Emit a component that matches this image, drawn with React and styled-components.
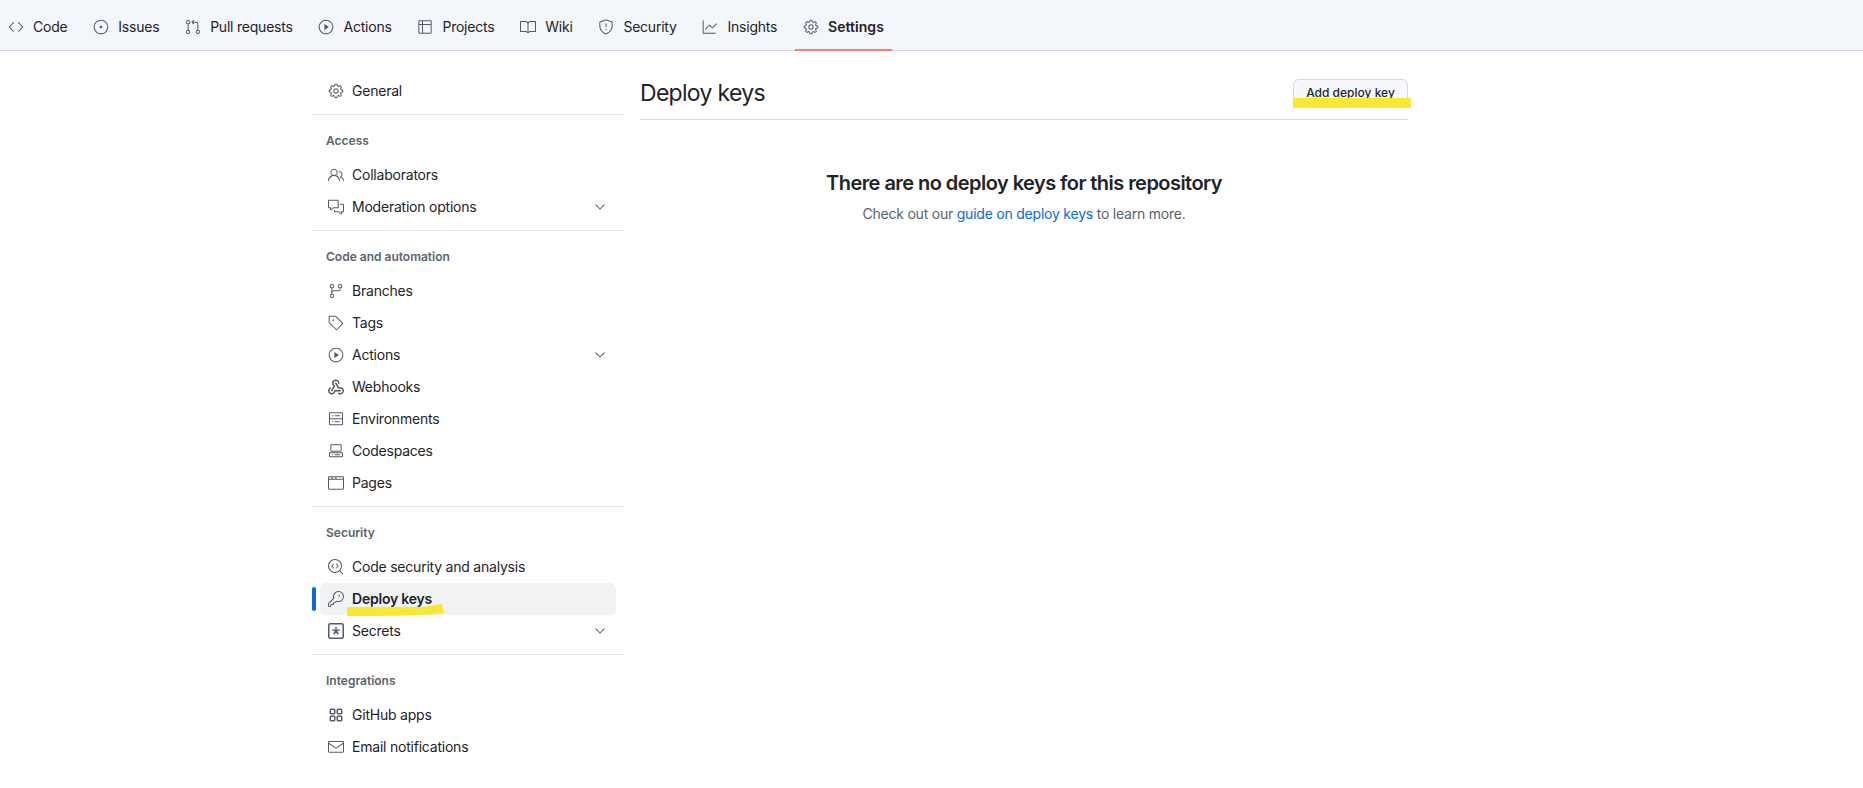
import React from "react";
import styled, { createGlobalStyle } from "styled-components";
import {
  GoCode, GoIssueOpened, GoGitPullRequest, GoPlay, GoTable, GoBook, GoShield, GoGraph, GoGear,
  GoPeople, GoCommentDiscussion, GoChevronDown, GoGitBranch, GoTag, GoServer,
  GoCodespaces, GoBrowser, GoCodescan, GoKey, GoMail,
} from "react-icons/go";

const Global = createGlobalStyle`
  html, body { margin: 0; padding: 0; background: #fff; }
  body { font-family: Inter, "Liberation Sans", sans-serif; color: #1f2328; font-size: 14px; letter-spacing: -0.22px; height: 788px; overflow: hidden; }
  * { box-sizing: border-box; }
`;

const GoWebhook = ({ size }) => (
  <svg width={size} height={size} viewBox="0 0 16 16" fill="currentColor">
    <path d="M5.5 4.25a2.25 2.25 0 0 1 4.5 0 .75.75 0 0 0 1.5 0 3.75 3.75 0 1 0-6.14 2.889l-2.272 4.258a.75.75 0 0 0 1.324.706L7 7.25a.75.75 0 0 0-.309-1.015A2.25 2.25 0 0 1 5.5 4.25Z" />
    <path d="M7.364 3.607a.75.75 0 0 1 1.03.257l2.608 4.349a3.75 3.75 0 1 1-.628 6.785.75.75 0 0 1 .752-1.299 2.25 2.25 0 1 0-.033-3.88.75.75 0 0 1-1.03-.256L7.107 4.636a.75.75 0 0 1 .257-1.03Z" />
    <path d="M2.9 8.776A.75.75 0 0 1 2.625 9.8 2.25 2.25 0 1 0 6 11.75a.75.75 0 0 1 .75-.751h5.5a.75.75 0 0 1 0 1.5H7.425a3.751 3.751 0 1 1-5.55-3.998.75.75 0 0 1 1.024.274Z" />
  </svg>
);
const GoApps = ({ size }) => (
  <svg width={size} height={size} viewBox="0 0 16 16" fill="none" stroke="currentColor" strokeWidth="1.5">
    <rect x="2.25" y="2.25" width="4.5" height="4.5" rx="1" />
    <rect x="9.25" y="2.25" width="4.5" height="4.5" rx="1" />
    <rect x="2.25" y="9.25" width="4.5" height="4.5" rx="1" />
    <rect x="9.25" y="9.25" width="4.5" height="4.5" rx="1" />
  </svg>
);
const GoKeyAsterisk = ({ size }) => (
  <svg width={size} height={size} viewBox="0 0 16 16" fill="none" stroke="currentColor" strokeWidth="1.5" strokeLinecap="round">
    <rect x="0.75" y="0.75" width="14.5" height="14.5" rx="1.5" />
    <path d="M8 4.5V8M8 8l3.2-1.1M8 8l2 2.8M8 8l-2 2.8M8 8 4.8 6.9" />
  </svg>
);

const TabBar = styled.nav`
  display: flex; height: 51px; background: #f3f6fa; border-bottom: 1px solid #d0d9e3;
`;
const Tab = styled.a`
  position: relative; display: flex; align-items: center; gap: 9px; height: 50px; padding: 3px 8px 0; margin-right: 9.8px;
  font-weight: ${(p) => (p.$active ? 600 : 400)}; letter-spacing: ${(p) => (p.$active ? "0.05px" : "-0.22px")}; color: #1f2328; white-space: nowrap;
  svg { color: #525c67; flex: none; }
  ${(p) => p.$active && `&::after { content: ""; position: absolute; left: 0; right: 0; bottom: -1px; height: 2px; background: #fc8070; }`}
`;
const Page = styled.div`display: flex; gap: 16px; padding: 16px 0 0 312px;`;
const Sidebar = styled.aside`width: 312px; flex: none; padding-top: 8px;`;
const Section = styled.ul`
  list-style: none; margin: 0; padding: 0 0 7px; border-bottom: ${(p) => (p.$last ? "none" : "1px solid #e6e8ec")};
  & + & { padding-top: 7px; }
`;
const Heading = styled.li`
  font-size: 12px; font-weight: 600; line-height: 20px; letter-spacing: 0; color: #59636e; padding: 0 14px; margin: 9px 0 8px; height: 20px;
`;
const Item = styled.li`
  position: relative; display: flex; align-items: center; height: 32px; margin: 0 8px; padding: 0 8px; border-radius: 6px;
  gap: 8px; background: ${(p) => (p.$active ? "#f1f2f4" : "transparent")}; font-weight: ${(p) => (p.$active ? 600 : 400)};
  svg { color: #525c67; flex: none; }
  ${(p) => p.$active && `&::before { content: ""; position: absolute; left: -8px; top: 4px; width: 4px; height: 24px; border-radius: 6px; background: #0969da; }`}
`;
const Label = styled.span`flex: 1; white-space: nowrap; padding-bottom: 2px;`;
const Mark = styled.svg`position: absolute; left: 27px; top: 21px; width: 98px; height: 12px; overflow: visible;`;
const Main = styled.main`width: 768px; flex: none;`;
const Header = styled.header`
  display: flex; justify-content: space-between; align-items: flex-start; height: 53px; border-bottom: 1px solid #d1d9e0;
`;
const Title = styled.h2`margin: 8px 0 0; font-size: 23px; font-weight: 400; line-height: 36px; letter-spacing: -0.7px;`;
const AddButton = styled.button`
  position: relative; font: 500 12px/20px Inter, "Liberation Sans", sans-serif; color: #1f2328; height: 28px; width: 115px; padding: 0; margin-top: 12px;
  background: #f6f8fa; border: 1px solid #d1d9e0; border-radius: 6px;
  &::after { content: ""; position: absolute; left: -1px; right: -4px; bottom: -2px; height: 10px; background: #f9e833; }
`;
const Empty = styled.section`text-align: center; padding-top: 48px;`;
const EmptyTitle = styled.h3`margin: 0 0 5px; font-size: 20px; font-weight: 600; line-height: 30px; letter-spacing: -0.55px;`;
const EmptyText = styled.p`margin: 0; color: #59636e; font-size: 14px; line-height: 21px;`;
const Link = styled.a`color: #0969da;`;

const tabs = [
  [GoCode, "Code"], [GoIssueOpened, "Issues"], [GoGitPullRequest, "Pull requests"], [GoPlay, "Actions"],
  [GoTable, "Projects"], [GoBook, "Wiki"], [GoShield, "Security"], [GoGraph, "Insights"], [GoGear, "Settings", true],
];
const groups = [
  { items: [[GoGear, "General"]] },
  { title: "Access", items: [[GoPeople, "Collaborators"], [GoCommentDiscussion, "Moderation options", true]] },
  { title: "Code and automation", items: [[GoGitBranch, "Branches"], [GoTag, "Tags"], [GoPlay, "Actions", true], [GoWebhook, "Webhooks"], [GoServer, "Environments"], [GoCodespaces, "Codespaces"], [GoBrowser, "Pages"]] },
  { title: "Security", items: [[GoCodescan, "Code security and analysis"], [GoKey, "Deploy keys", false, true], [GoKeyAsterisk, "Secrets", true]] },
  { title: "Integrations", last: true, items: [[GoApps, "GitHub apps"], [GoMail, "Email notifications"]] },
];

export default function App() {
  return (
    <>
      <Global />
      <TabBar>
        {tabs.map(([Icon, label, active]) => (
          <Tab key={label} $active={active}><Icon size={16} />{label}</Tab>
        ))}
      </TabBar>
      <Page>
        <Sidebar>
          {groups.map((g, i) => (
            <Section key={i} $last={g.last}>
              {g.title && <Heading>{g.title}</Heading>}
              {g.items.map(([Icon, label, caret, active]) => (
                <Item key={label} $active={active}>
                  <Icon size={16} />
                  <Label>{label}</Label>
                  {caret && <GoChevronDown size={16} />}
                  {active && (
                    <Mark viewBox="0 0 98 12"><path d="M0 3 L75 3 L95 0 L97 9 C75 12 30 12 0 12 Z" fill="#f9e833" /></Mark>
                  )}
                </Item>
              ))}
            </Section>
          ))}
        </Sidebar>
        <Main>
          <Header>
            <Title>Deploy keys</Title>
            <AddButton>Add deploy key</AddButton>
          </Header>
          <Empty>
            <EmptyTitle>There are no deploy keys for this repository</EmptyTitle>
            <EmptyText>Check out our <Link>guide on deploy keys</Link> to learn more.</EmptyText>
          </Empty>
        </Main>
      </Page>
    </>
  );
}
